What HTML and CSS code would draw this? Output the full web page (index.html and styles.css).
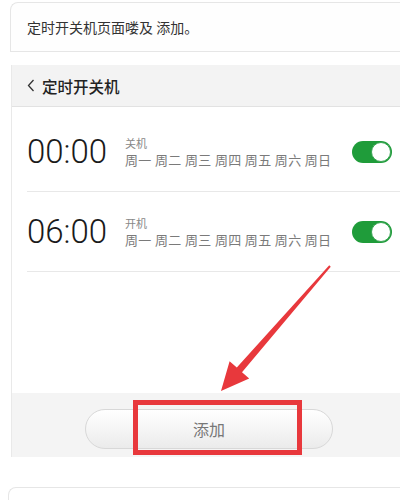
FILE: index.html
```html
<!DOCTYPE html>
<html lang="zh">
<head>
<meta charset="utf-8">
<link rel="stylesheet" href="styles.css">
</head>
<body>
<div class="page">
  <div class="note">定时开关机页面喽及 添加。</div>
  <div class="phone">
    <div class="header">
      <svg class="back" width="8" height="13" viewBox="0 0 8 13"><path d="M6.5 1 L1.5 6.5 L6.5 12" fill="none" stroke="#333" stroke-width="1.3"/></svg>
      <span>定时开关机</span>
    </div>
    <div class="list">
      <div class="row">
        <div class="time">00:00</div>
        <div class="info">
          <div class="kind">关机</div>
          <div class="days">周一 周二 周三 周四 周五 周六 周日</div>
        </div>
        <div class="toggle"><div class="knob"></div></div>
      </div>
      <div class="row">
        <div class="time">06:00</div>
        <div class="info">
          <div class="kind">开机</div>
          <div class="days">周一 周二 周三 周四 周五 周六 周日</div>
        </div>
        <div class="toggle"><div class="knob"></div></div>
      </div>
    </div>
    <div class="footer">
      <div class="add">添加</div>
    </div>
  </div>
  <div class="next"></div>
  <div class="redbox"></div>
  <svg class="arrow" width="400" height="500" viewBox="0 0 400 500">
    <path d="M329.25 265.34 L236.8 367.6 L229.6 361.3 L221 391 L249.2 378.4 L242 372.2 L330.75 266.66 Z" fill="#e8383c"/>
  </svg>
</div>
</body>
</html>
```

FILE: styles.css
```css
html, body {
  margin: 0;
  padding: 0;
  background: #fff;
}
.page {
  position: relative;
  width: 400px;
  height: 500px;
  overflow: hidden;
  font-family: "Noto Sans CJK SC", "Noto Sans", sans-serif;
  padding-top: 2px;
  box-sizing: border-box;
}
.note {
  margin-left: 10px;
  height: 50px;
  box-sizing: border-box;
  border: 1px solid #e6e6e6;
  border-right: none;
  border-top-left-radius: 8px;
  display: flex;
  align-items: center;
  padding-left: 16px;
  font-size: 14px;
  color: #333;
  background: #fefefe;
}
.phone {
  margin-top: 13px;
  margin-left: 11px;
  border-left: 1px solid #e9e9e9;
}
.header {
  height: 42px;
  box-sizing: border-box;
  background: #f3f3f3;
  border-bottom: 1px solid #e2e2e2;
  display: flex;
  align-items: center;
  padding-left: 15px;
  gap: 7px;
  font-size: 15.5px;
  color: #222;
  font-weight: 500;
}
.back {
  display: block;
}
.list {
  padding-top: 5px;
  height: 286px;
  box-sizing: border-box;
  background: #fff;
}
.row {
  margin-left: 15px;
  height: 80px;
  box-sizing: border-box;
  border-bottom: 1px solid #e8e8e8;
  display: flex;
  align-items: center;
}
.time {
  font-family: Roboto, "Liberation Sans", sans-serif;
  font-weight: 300;
  font-size: 33px;
  color: #1a1a1a;
  width: 98px;
  margin-top: 0;
}
.info {
  flex: 1;
  display: flex;
  flex-direction: column;
  margin-top: 1px;
}
.kind {
  font-size: 11px;
  color: #888;
  line-height: 16px;
}
.days {
  font-size: 13px;
  letter-spacing: 0.35px;
  color: #7a7a7a;
  line-height: 18px;
  white-space: nowrap;
}
.toggle {
  width: 40px;
  height: 22px;
  border-radius: 11px;
  background: #1f9c3a;
  margin-right: 8px;
  margin-top: 0;
  position: relative;
}
.knob {
  position: absolute;
  right: 1px;
  top: 1px;
  width: 20px;
  height: 20px;
  box-sizing: border-box;
  border-radius: 50%;
  background: #fff;
  border: 1px solid #3aa554;
}
.footer {
  height: 64px;
  background: #f4f4f4;
  display: flex;
  align-items: center;
  padding-left: 73px;
}
.add {
  width: 248px;
  height: 40px;
  box-sizing: border-box;
  border: 1px solid #d8d8d8;
  border-radius: 20px;
  background: linear-gradient(#ffffff, #ebebeb);
  display: flex;
  align-items: center;
  justify-content: center;
  font-size: 16px;
  color: #777;
  margin-top: 8px;
}
.next {
  margin-top: 30px;
  margin-left: 8px;
  height: 40px;
  border-top: 1px solid #e6e6e6;
  border-left: 1px solid #e6e6e6;
  border-top-left-radius: 8px;
}
.redbox {
  position: absolute;
  left: 133px;
  top: 400px;
  width: 169px;
  height: 55px;
  box-sizing: border-box;
  border: 5px solid #e8383c;
}
.arrow {
  position: absolute;
  left: 0;
  top: 0;
}
```
